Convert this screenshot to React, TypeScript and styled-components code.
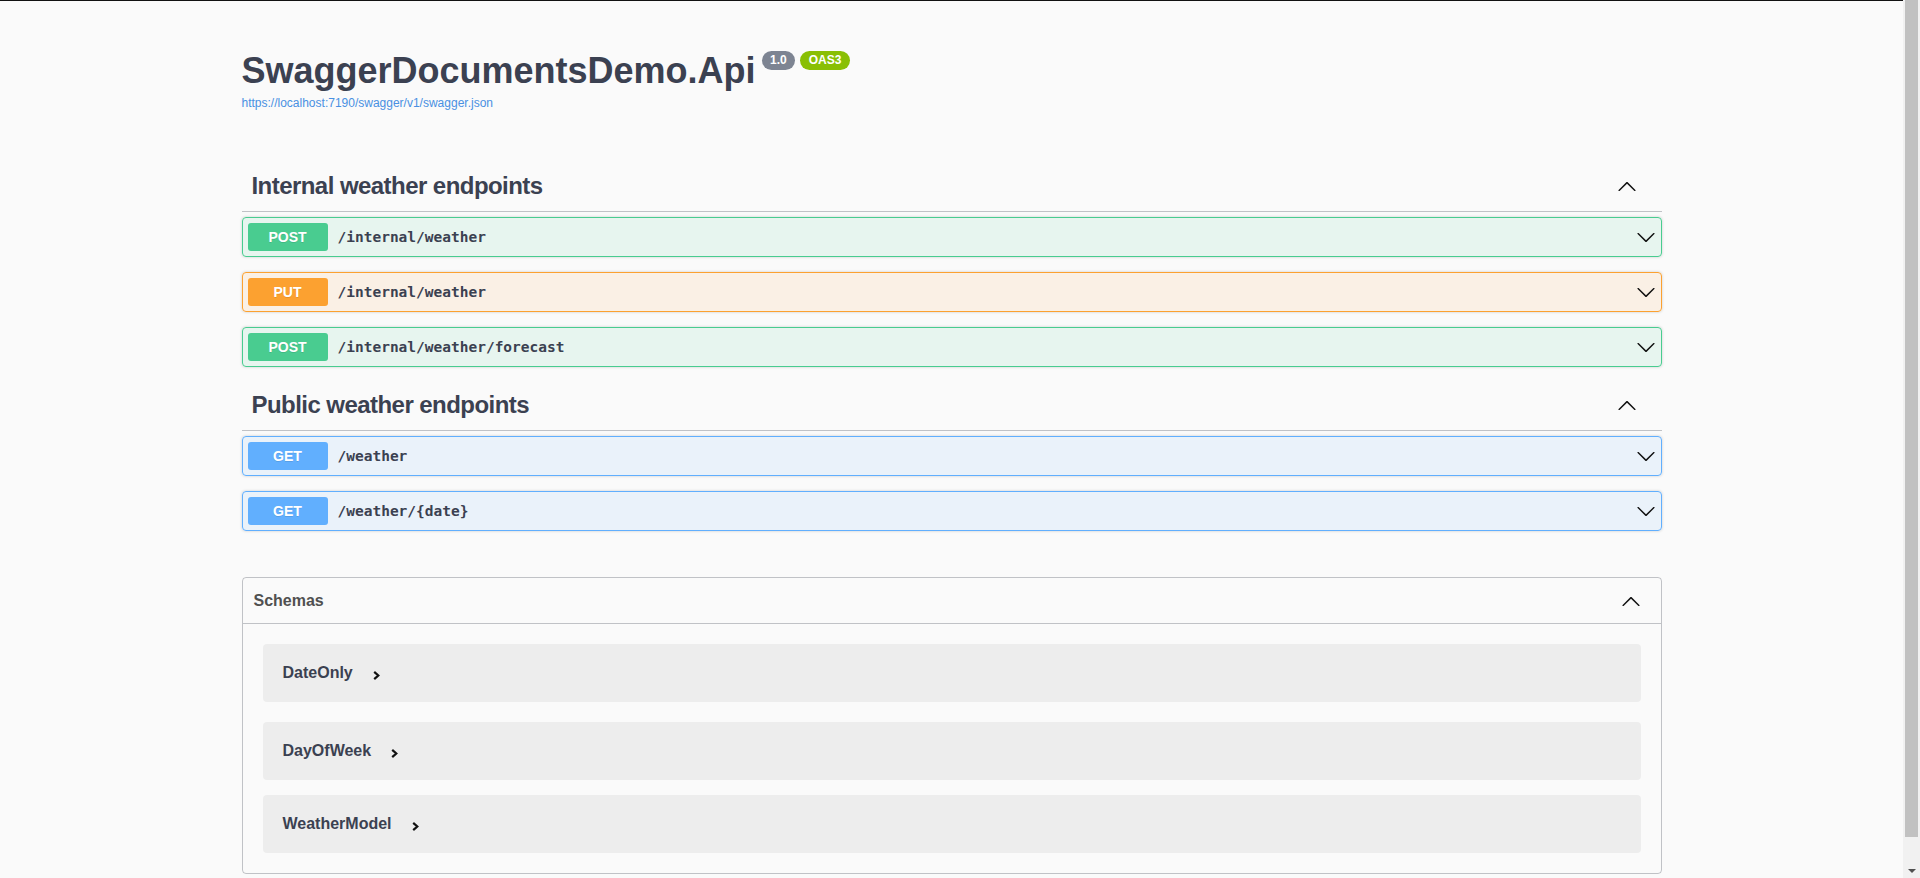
import React from 'react';
import styled, { createGlobalStyle } from 'styled-components';

type Method = 'get' | 'post' | 'put';

const methodColors: Record<Method, { main: string; bg: string }> = {
  get: { main: '#61affe', bg: 'rgba(97, 175, 254, 0.1)' },
  post: { main: '#49cc90', bg: 'rgba(73, 204, 144, 0.1)' },
  put: { main: '#fca130', bg: 'rgba(252, 161, 48, 0.1)' },
};

const sections: { name: string; ops: { method: Method; path: string }[] }[] = [
  {
    name: 'Internal weather endpoints',
    ops: [
      { method: 'post', path: '/internal/weather' },
      { method: 'put', path: '/internal/weather' },
      { method: 'post', path: '/internal/weather/forecast' },
    ],
  },
  {
    name: 'Public weather endpoints',
    ops: [
      { method: 'get', path: '/weather' },
      { method: 'get', path: '/weather/{date}' },
    ],
  },
];

const schemas = [
  { name: 'DateOnly', gap: 20 },
  { name: 'DayOfWeek', gap: 15 },
  { name: 'WeatherModel', gap: 0 },
];

const ArrowDown = () => (
  <ArrowIcon viewBox="0 0 20 20" width="20" height="20">
    <path d="M17.418 6.109c.272-.268.709-.268.979 0s.271.701 0 .969l-7.908 7.83c-.27.268-.707.268-.979 0l-7.908-7.83c-.27-.268-.27-.701 0-.969.271-.268.709-.268.979 0L10 13.25l7.418-7.141z" />
  </ArrowIcon>
);

const ArrowUp = () => (
  <ArrowIcon viewBox="0 0 20 20" width="20" height="20">
    <path d="M17.418 14.908c.272.268.709.268.979 0s.271-.701 0-.969l-7.908-7.83c-.27-.268-.707-.268-.979 0l-7.908 7.83c-.27.268-.27.701 0 .969.271.268.709.268.979 0L10 7.767l7.418 7.141z" />
  </ArrowIcon>
);

const ChevronRight = () => (
  <ToggleIcon viewBox="0 0 7 9" width="7" height="9">
    <path d="M1.2 0.9 L5.3 4.5 L1.2 8.1" fill="none" stroke="#111" strokeWidth="2.2" />
  </ToggleIcon>
);

export default function App() {
  return (
    <Viewport>
      <GlobalStyle />
      <Page>
        <TopRule />
        <Wrapper>
          <Info>
            <Title>
              SwaggerDocumentsDemo.Api
              <Badge $color="#7d8492">1.0</Badge>
              <Badge $color="#89bf04">OAS3</Badge>
            </Title>
            <SpecLink href="#">https://localhost:7190/swagger/v1/swagger.json</SpecLink>
          </Info>

          <Operations>
            {sections.map((section) => (
              <TagSection key={section.name}>
                <TagHeader>
                  <TagName>{section.name}</TagName>
                  <ArrowUp />
                </TagHeader>
                {section.ops.map((op, i) => (
                  <OpBlock key={i} $method={op.method}>
                    <MethodBadge $method={op.method}>{op.method.toUpperCase()}</MethodBadge>
                    <OpPath>{op.path}</OpPath>
                    <ArrowDown />
                  </OpBlock>
                ))}
              </TagSection>
            ))}
          </Operations>

          <Models>
            <ModelsHeader>
              <span>Schemas</span>
              <ArrowUp />
            </ModelsHeader>
            <ModelsBody>
              {schemas.map((s) => (
                <ModelContainer key={s.name} $gap={s.gap}>
                  <ModelTitle>{s.name}</ModelTitle>
                  <ChevronRight />
                </ModelContainer>
              ))}
            </ModelsBody>
          </Models>
        </Wrapper>
      </Page>

      <Scrollbar>
        <ScrollThumb />
        <ScrollButton />
      </Scrollbar>
    </Viewport>
  );
}

const GlobalStyle = createGlobalStyle`
  html, body {
    margin: 0;
    overflow: hidden;
  }
  body {
    background: #fafafa;
    font-family: 'Liberation Sans', Arial, sans-serif;
    color: #3b4151;
  }
`;

const Viewport = styled.div`
  display: flex;
  height: 100vh;
  overflow: hidden;
`;

const Page = styled.div`
  flex: 1;
  min-width: 0;
  overflow: hidden;
`;

const Scrollbar = styled.div`
  flex: none;
  display: flex;
  flex-direction: column;
  justify-content: space-between;
  width: 17px;
  background: #f1f1f1;
`;

const ScrollThumb = styled.div`
  height: 837px;
  margin: 0 2px;
  background: #c1c1c1;
`;

const ScrollButton = styled.div`
  display: flex;
  align-items: center;
  justify-content: center;
  height: 17px;

  &::after {
    content: '';
    margin-top: 2px;
    border-left: 4px solid transparent;
    border-right: 4px solid transparent;
    border-top: 4px solid #505050;
  }
`;

const TopRule = styled.div`
  height: 1px;
  background: #111;
`;

const Wrapper = styled.div`
  box-sizing: border-box;
  max-width: 1460px;
  width: 100%;
  margin: 0 auto;
  padding: 0 20px 30px;
`;

const Info = styled.hgroup`
  margin: 0;
  padding-top: 49px;
`;

const Title = styled.h2`
  display: flex;
  align-items: flex-start;
  margin: 0;
  font-size: 36px;
  line-height: 41px;
  font-weight: 700;
  color: #3b4151;
`;

const Badge = styled.small<{ $color: string }>`
  margin: 1px 0 0 6px;
  height: 19px;
  padding: 0 8.5px;
  border-radius: 57px;
  background: ${(p) => p.$color};
  color: #fff;
  font-size: 12px;
  font-weight: 700;
  line-height: 19px;

  & + & {
    margin-left: 5px;
  }
`;

const SpecLink = styled.a`
  display: block;
  margin-top: 5px;
  font-size: 12px;
  line-height: 14px;
  color: #4990e2;
  text-decoration: none;
`;

const Operations = styled.div`
  margin-top: 53px;
`;

const TagSection = styled.section`
  display: flex;
  flex-direction: column;
`;

const TagHeader = styled.h3`
  display: flex;
  align-items: center;
  margin: 0 0 5px;
  padding: 9px 25px 11px 10px;
  border-bottom: 1px solid rgba(59, 65, 81, 0.3);
  font-size: 24px;
  line-height: 28px;
  font-weight: 700;
  color: #3b4151;
`;

const TagName = styled.span`
  flex: 1;
  letter-spacing: -0.55px;
`;

const ArrowIcon = styled.svg`
  flex: none;
  fill: #111;
`;

const OpBlock = styled.div<{ $method: Method }>`
  box-sizing: border-box;
  display: flex;
  align-items: center;
  height: 40px;
  margin-bottom: 15px;
  padding: 5px;
  border: 1px solid ${(p) => methodColors[p.$method].main};
  border-radius: 4px;
  background: ${(p) => methodColors[p.$method].bg};
  box-shadow: 0 0 3px rgba(0, 0, 0, 0.19);
`;

const MethodBadge = styled.span<{ $method: Method }>`
  min-width: 80px;
  padding: 6px 0;
  border-radius: 3px;
  background: ${(p) => methodColors[p.$method].main};
  color: #fff;
  font-size: 14px;
  line-height: 16px;
  font-weight: 700;
  text-align: center;
  text-shadow: 0 1px 0 rgba(0, 0, 0, 0.1);
`;

const OpPath = styled.span`
  flex: 1;
  padding: 0 10px;
  font-family: 'DejaVu Sans Mono', 'Liberation Mono', monospace;
  font-size: 14.5px;
  font-weight: 700;
  color: #3b4151;
`;

const Models = styled.section`
  margin-top: 31px;
  border: 1px solid rgba(59, 65, 81, 0.3);
  border-radius: 4px;
`;

const ModelsHeader = styled.h4`
  display: flex;
  align-items: center;
  justify-content: space-between;
  height: 45px;
  margin: 0;
  padding: 0 20px 0 11px;
  border-bottom: 1px solid rgba(59, 65, 81, 0.3);
  font-size: 16px;
  font-weight: 700;
  color: #505050;
`;

const ModelsBody = styled.div`
  padding: 20px 20px;
`;

const ModelContainer = styled.div<{ $gap: number }>`
  display: flex;
  align-items: center;
  height: 58px;
  margin-bottom: ${(p) => p.$gap}px;
  padding: 0 20px;
  border-radius: 4px;
  background: rgba(0, 0, 0, 0.05);
`;

const ModelTitle = styled.span`
  font-size: 16px;
  font-weight: 700;
  color: #3b4151;
`;

const ToggleIcon = styled.svg`
  margin: 5px 0 0 20px;
`;
